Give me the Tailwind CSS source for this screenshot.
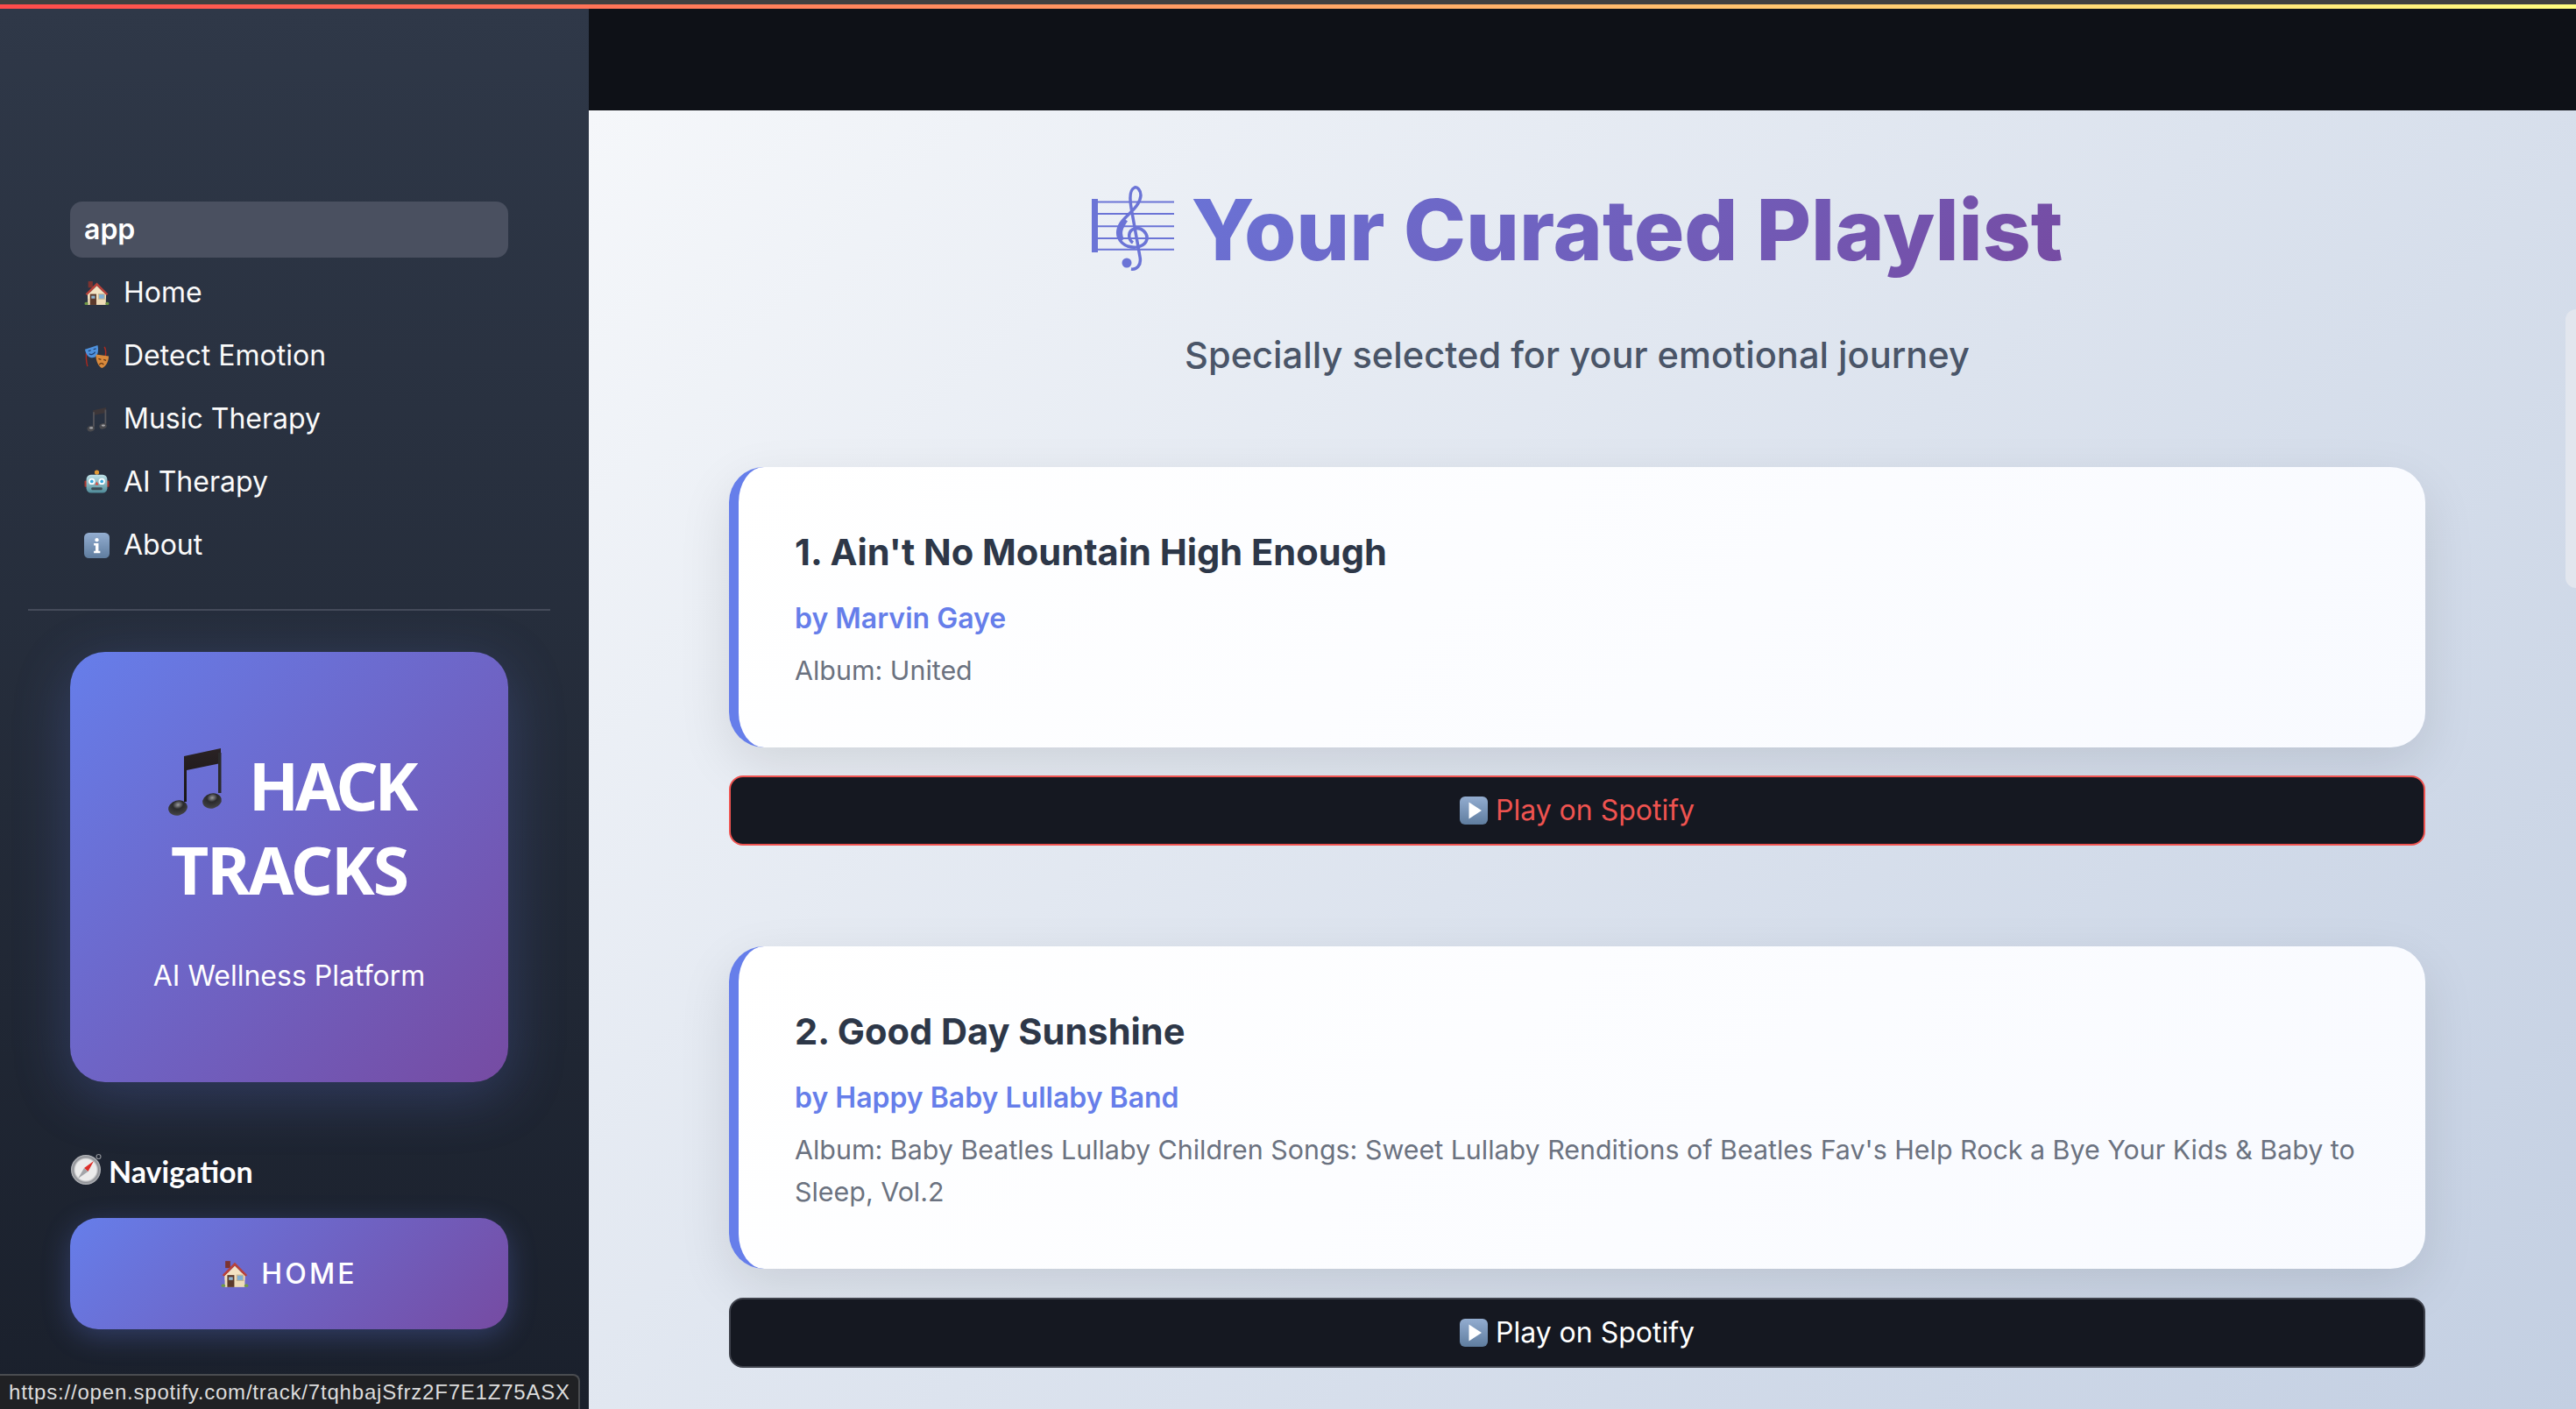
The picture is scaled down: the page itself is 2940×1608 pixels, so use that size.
<!DOCTYPE html>
<html lang="en">
<head>
  <meta charset="UTF-8" />
  <meta name="viewport" content="width=device-width, initial-scale=1.0" />
  <script src="https://cdn.jsdelivr.net/npm/@tailwindcss/browser@4"></script>
  <title>Hack Tracks</title>
</head>
<body class="relative w-[2940px] h-[1608px] overflow-hidden bg-[#0e1117] font-['Inter',sans-serif]">

  <!-- emoji drawn once, used by <use> below -->
  <svg class="absolute w-0 h-0" aria-hidden="true">
    <defs>
      <linearGradient id="noteGrad" x1="0" y1="0" x2="0" y2="1"><stop offset="0" stop-color="#2a2224"/><stop offset="1" stop-color="#171516"/></linearGradient>
      <radialGradient id="headGrad" cx="0.55" cy="0.3" r="0.8"><stop offset="0" stop-color="#9a9a9e"/><stop offset="0.35" stop-color="#2a2a2c"/><stop offset="1" stop-color="#4b4b4e"/></radialGradient>
      <linearGradient id="tileGrad" x1="0" y1="0" x2="0" y2="1"><stop offset="0" stop-color="#93add0"/><stop offset="1" stop-color="#5f7d9f"/></linearGradient>
      <linearGradient id="robotGrad" x1="0" y1="0" x2="0" y2="1"><stop offset="0" stop-color="#bfe2e8"/><stop offset="1" stop-color="#4f8b99"/></linearGradient>
      <radialGradient id="compassGrad" cx="0.5" cy="0.5" r="0.5"><stop offset="0.7" stop-color="#ececec"/><stop offset="0.85" stop-color="#8d8f94"/><stop offset="1" stop-color="#b9bbbf"/></radialGradient>
    </defs>
    <symbol id="house" viewBox="0 0 28 28">
      <rect x="4.500" y="1" width="5" height="7" fill="#7d3330"/>
      <rect x="4" y="13" width="20" height="14" fill="#efdcb8"/>
      <path d="M1.500 15 14 2.500 26.500 15 24.500 16.500 14 6 3.500 16.500Z" fill="#b8423a"/>
      <path d="M14 6 24 16v4H4v-4z" fill="#f3e3c3"/>
      <rect x="6.500" y="15" width="7" height="12" fill="#5c3a2c"/>
      <rect x="8" y="17" width="4" height="3" fill="#8fb5d0"/>
      <rect x="16" y="15" width="6.500" height="5.500" fill="#7fb0d6" stroke="#cdb68e"/>
      <rect x="0.500" y="24" width="4" height="3" rx="1.500" fill="#6f9a45"/>
      <rect x="23.500" y="24" width="4" height="3" rx="1.500" fill="#6f9a45"/>
    </symbol>
    <symbol id="masks" viewBox="0 0 30 30">
      <path d="M3 9C2 15 2 20 4 27" fill="none" stroke="#a8281f" stroke-width="1.500"/>
      <path d="M24 4c2 4 2 7 1 11" fill="none" stroke="#b02a1e" stroke-width="1.500"/>
      <path d="M1 7 16 2c1 5 1 11-3 14-4 2-10 1-12-9z" fill="#4f92dd"/>
      <path d="M5 9l3-1M11 7l3-1M6 12c2 2 5 1 7-2" fill="none" stroke="#1d3f70" stroke-width="1.300"/>
      <path d="M14 13 29 15c0 6-3 12-8 14-4-2-7-8-7-14z" fill="#d98a3c"/>
      <path d="M17 18l3 1M23 19l3 1M18 25c1-2 4-2 5 0" fill="none" stroke="#5f3512" stroke-width="1.300"/>
    </symbol>
    <symbol id="note" viewBox="10 12 66 82">
      <path d="M31 24 73 15V32L34 40V76H31Z" fill="url(#noteGrad)"/>
      <rect x="70" y="20" width="3.500" height="46" fill="#2b2a2c"/>
      <ellipse cx="24" cy="83" rx="11" ry="8.500" transform="rotate(-15 24 83)" fill="url(#headGrad)"/>
      <ellipse cx="63" cy="75" rx="11" ry="8.500" transform="rotate(-15 63 75)" fill="url(#headGrad)"/>
    </symbol>
    <!-- same note with heavier stems, it gets lost on the dark sidebar at this size -->
    <symbol id="noteSmall" viewBox="10 12 66 82">
      <path d="M31 24 73 15V32L31 40Z" fill="#3d3638"/>
      <path d="M33 30V78M71 22V68" fill="none" stroke="#55555a" stroke-width="5"/>
      <ellipse cx="24" cy="83" rx="12" ry="9" transform="rotate(-15 24 83)" fill="#4a4a4e"/>
      <ellipse cx="63" cy="75" rx="12" ry="9" transform="rotate(-15 63 75)" fill="#4a4a4e"/>
      <ellipse cx="25" cy="81" rx="6" ry="3" fill="#a9a9ad"/>
      <ellipse cx="64" cy="73" rx="6" ry="3" fill="#a9a9ad"/>
    </symbol>
    <symbol id="robot" viewBox="0 0 28 28">
      <circle cx="14" cy="3" r="2.500" fill="#e39b35"/>
      <rect x="0.500" y="12" width="3" height="7" rx="1" fill="#a8362e"/>
      <rect x="24.500" y="12" width="3" height="7" rx="1" fill="#a8362e"/>
      <rect x="2.500" y="5.500" width="23" height="20" rx="5" fill="url(#robotGrad)"/>
      <circle cx="8.500" cy="13" r="3.500" fill="#fff"/><circle cx="8.500" cy="13" r="1.800" fill="#38a9dd"/>
      <circle cx="19.500" cy="13" r="3.500" fill="#fff"/><circle cx="19.500" cy="13" r="1.800" fill="#38a9dd"/>
      <path d="M14 13l2 4h-4z" fill="#d9483e"/>
      <rect x="8" y="19.500" width="12" height="3" rx="1" fill="#3d4c55"/>
    </symbol>
    <symbol id="info" viewBox="0 0 30 30">
      <rect width="30" height="30" rx="5.500" fill="url(#tileGrad)"/>
      <circle cx="15" cy="8.500" r="2.200" fill="#fff"/>
      <path d="M11.500 12.500H17V21.500H19V24H11.500V21.500H13.500V15H11.500Z" fill="#fff"/>
    </symbol>
    <symbol id="compass" viewBox="0 0 38 38">
      <circle cx="32.500" cy="5" r="2.500" fill="none" stroke="#8c8f95" stroke-width="1.200"/>
      <circle cx="18" cy="20" r="17" fill="url(#compassGrad)"/>
      <path d="M27 10 20.500 22 16 18Z" fill="#dc2f2a"/>
      <path d="M9 30 16 18 20.500 22Z" fill="#a3a5a9"/>
    </symbol>
    <symbol id="play" viewBox="0 0 32 32">
      <rect width="32" height="32" rx="6" fill="url(#tileGrad)"/>
      <path d="M10.500 6.500 25 16 10.500 25.500Z" fill="#fff"/>
    </symbol>
  </svg>

  <!-- top strip -->
  <div class="h-[5px] bg-[#404040]"></div>
  <div class="h-[5px] bg-[linear-gradient(90deg,#ff4b4b,#fffd80)]"></div>

  <div class="flex h-[1598px]">
    <!-- Sidebar -->
    <aside class="w-[672px] shrink-0 bg-[linear-gradient(180deg,#2f3848,#1a202c)] pt-[220px] text-[#fafafa]">
      <nav class="ml-[80px] mr-[92px] flex flex-col gap-[8px] text-[32px]">
        <div class="h-[64px] flex items-center px-[16px] rounded-[14px] bg-[#4a5060] font-semibold text-white">app</div>
        <div class="h-[64px] flex items-center gap-[16px] px-[16px]"><svg class="w-[29px] h-[29px]"><use href="#house"/></svg>Home</div>
        <div class="h-[64px] flex items-center gap-[16px] px-[16px]"><svg class="w-[29px] h-[29px]"><use href="#masks"/></svg>Detect Emotion</div>
        <div class="h-[64px] flex items-center gap-[16px] px-[16px]"><svg class="w-[29px] h-[29px]"><use href="#noteSmall"/></svg>Music Therapy</div>
        <div class="h-[64px] flex items-center gap-[16px] px-[16px]"><svg class="w-[29px] h-[29px]"><use href="#robot"/></svg>AI Therapy</div>
        <div class="h-[64px] flex items-center gap-[16px] px-[16px]"><svg class="w-[29px] h-[29px]"><use href="#info"/></svg>About</div>
      </nav>

      <div class="ml-[32px] mr-[44px] mt-[41px] h-[2px] bg-[#454b5a]"></div>

      <div class="ml-[80px] mr-[92px] mt-[47px] h-[491px] rounded-[40px] bg-[linear-gradient(135deg,#667eea,#764ba2)] shadow-[0_16px_64px_rgba(102,126,234,0.25)] text-white text-center pt-[104px]">
        <h2 class="font-['Noto_Sans',sans-serif] font-bold text-[75px] leading-[96px] tracking-[-2px]"><svg class="inline-block w-[66px] h-[82px] mr-[29px] ml-[2px] align-[-8px]"><use href="#note"/></svg><span class="tracking-[-4px]">HACK</span> TRACKS</h2>
        <p class="mt-[50px] text-[32px] leading-[48px]">AI Wellness Platform</p>
      </div>

      <div class="ml-[80px] mr-[92px] mt-[76px] h-[50px] flex items-center gap-[6px] font-['Lato',sans-serif] font-bold text-[34px] text-white"><svg class="w-[38px] h-[38px] -mt-[4px]"><use href="#compass"/></svg>Navigation</div>

      <div class="ml-[80px] mr-[92px] mt-[29px] h-[127px] rounded-[32px] bg-[linear-gradient(135deg,#667eea,#764ba2)] shadow-[0_8px_32px_rgba(102,126,234,0.3)] flex items-center justify-center gap-[14px] text-white text-[32px] font-medium tracking-[3.2px]"><svg class="w-[32px] h-[32px]"><use href="#house"/></svg>HOME</div>
    </aside>

    <!-- Main -->
    <main class="flex-1 min-w-0 flex flex-col">
      <div class="h-[116px] shrink-0 bg-[#0e1117]"></div>
      <div class="flex-1 bg-[linear-gradient(135deg,#f5f7fa,#c3cfe2)] pl-[160px] pr-[172px] pt-[78px]">
        <h1 class="flex justify-center items-center gap-[25px] h-[116px]">
          <svg class="w-[115px] h-[115px] -ml-[11px] -mr-[15px] -mt-[8px]" viewBox="0 0 115 115" fill="none" stroke="#6b74d6">
            <rect x="11" y="26" width="7" height="61" fill="#6b74d6" stroke="none"/>
            <path d="M18 29.500H105M18 43H105M18 57.300H105M18 71H105M18 83.700H105" stroke-width="2"/>
            <path d="M58 76C52 72 52 62 60 60 68 58 75 65 74 72 72 80 62 83 52 80 42 76 37 66 44 54 50 44 66 36 67 22 67 16 63 12 60 13 55 15 54 24 56 36L66 92C68 102 62 107 56 106" stroke-width="3.500"/>
            <path d="M50 50C44 58 41 66 46 73" stroke-width="5"/>
            <circle cx="51" cy="99" r="5.500" fill="#6b74d6" stroke="none"/>
          </svg>
          <span class="text-[96px] leading-[116px] font-extrabold bg-[linear-gradient(135deg,#6a73d6,#764ba2)] bg-clip-text text-transparent">Your Curated Playlist</span>
        </h1>
        <p class="mt-[51px] text-center text-[41.6px] leading-[68px] font-medium text-[#4a5568]">Specially selected for your emotional journey</p>

        <article class="mt-[94px] rounded-[40px] border-l-[11px] border-[#667eea] bg-[linear-gradient(135deg,#ffffff,#f8faff)] shadow-[0_20px_60px_rgba(0,0,0,0.1)] p-[64px]">
          <h3 class="text-[41.6px] leading-[67px] font-bold text-[#2d3748]">1. Ain't No Mountain High Enough</h3>
          <p class="mt-[15px] text-[32px] leading-[53px] font-semibold text-[#667eea]">by Marvin Gaye</p>
          <p class="mt-[9px] text-[30.4px] leading-[48px] text-[#6b7280]">Album: United</p>
        </article>
        <button class="mt-[32px] w-full h-[80px] rounded-[16px] border-2 border-[#ef5350] bg-[#151821] text-[#ef5350] text-[32px] flex items-center justify-center gap-[9px]"><svg class="w-[32px] h-[32px]"><use href="#play"/></svg>Play on Spotify</button>

        <article class="mt-[115px] rounded-[40px] border-l-[11px] border-[#667eea] bg-[linear-gradient(135deg,#ffffff,#f8faff)] shadow-[0_20px_60px_rgba(0,0,0,0.1)] p-[64px]">
          <h3 class="text-[41.6px] leading-[67px] font-bold text-[#2d3748]">2. Good Day Sunshine</h3>
          <p class="mt-[15px] text-[32px] leading-[53px] font-semibold text-[#667eea]">by Happy Baby Lullaby Band</p>
          <p class="mt-[9px] text-[30.4px] leading-[48px] text-[#6b7280]">Album: Baby Beatles Lullaby Children Songs: Sweet Lullaby Renditions of Beatles Fav's Help Rock a Bye Your Kids &amp; Baby to Sleep, Vol.2</p>
        </article>
        <button class="mt-[33px] w-full h-[80px] rounded-[16px] border-2 border-[#3f424c] bg-[#151821] text-white text-[32px] flex items-center justify-center gap-[9px]"><svg class="w-[32px] h-[32px]"><use href="#play"/></svg>Play on Spotify</button>
      </div>
    </main>
  </div>

  <!-- scrollbar thumb -->
  <div class="absolute right-0 top-[353px] w-[12px] h-[318px] rounded-l-full bg-[#e2e6ee]"></div>

  <!-- link preview bubble -->
  <div class="absolute left-0 bottom-0 w-[662px] h-[40px] px-[10px] flex items-center bg-[#202124] border-t-2 border-r-2 border-[#4a4c50] rounded-tr-[8px] font-['Liberation_Sans',sans-serif] text-[24px] tracking-[0.8px] text-[#dcdcdc] whitespace-nowrap">https://open.spotify.com/track/7tqhbajSfrz2F7E1Z75ASX</div>
</body>
</html>
